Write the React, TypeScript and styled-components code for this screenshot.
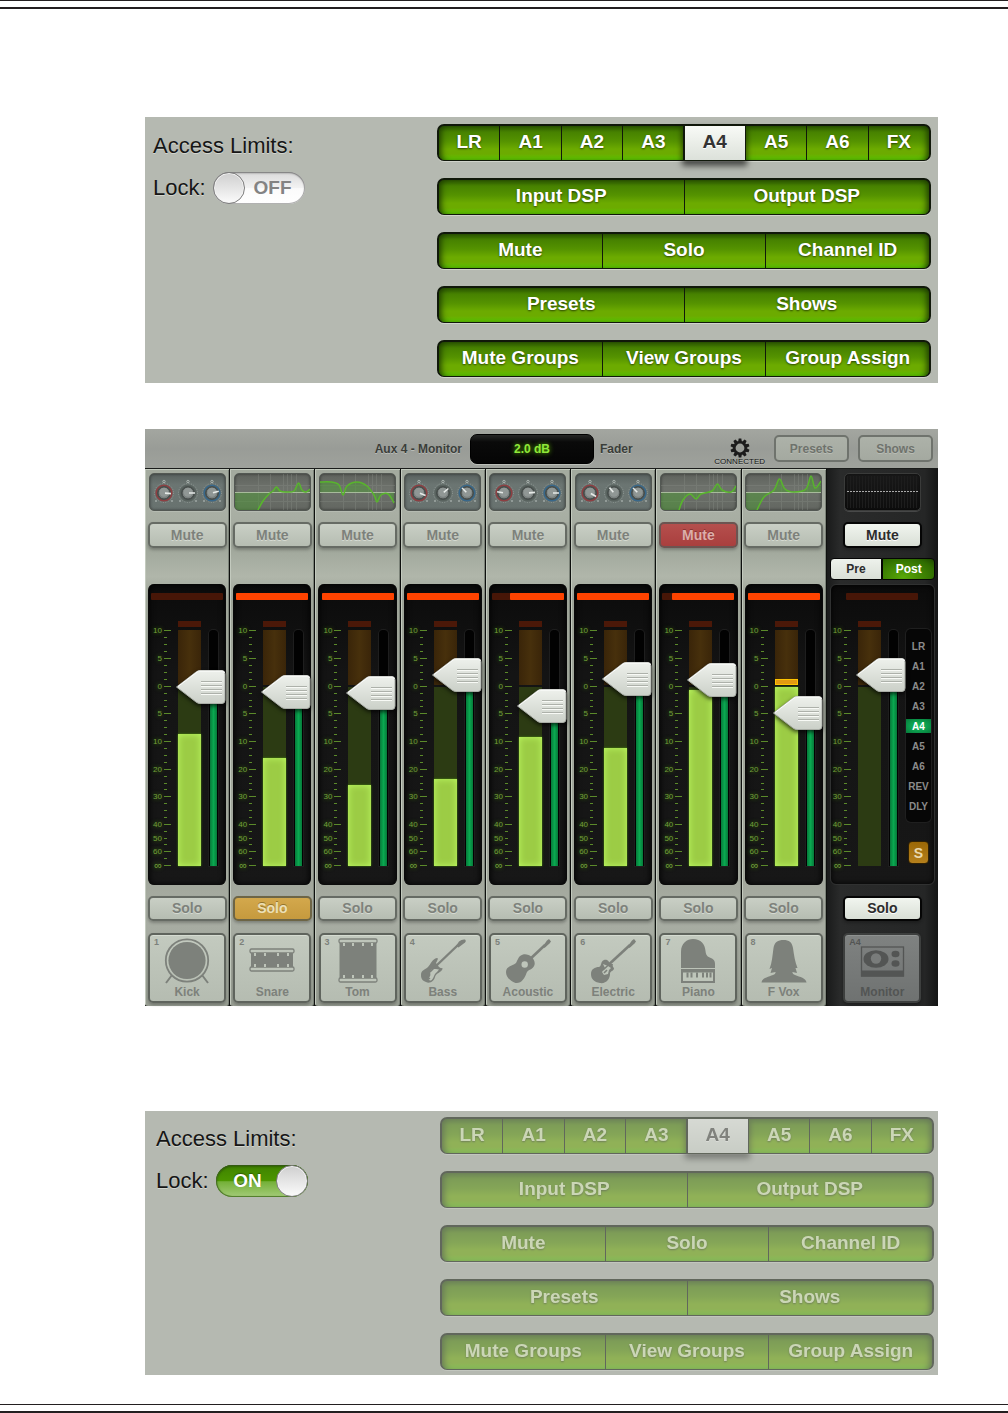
import React, { useId, useState } from "react";
import styled, { createGlobalStyle, css } from "styled-components";

const GlobalStyle = createGlobalStyle`
  *, *::before, *::after { box-sizing: border-box; }
  body {
    margin: 0;
    background: #ffffff;
    font-family: "Liberation Sans", Arial, Helvetica, sans-serif;
  }
  button { font-family: inherit; padding: 0; margin: 0; cursor: pointer; }
`;

/* ---------- page ---------- */

const Rule = styled.hr`
  height: 9px;
  margin: 0;
  border: solid #231f20;
  border-width: 1px 0 2px;
`;

const Main = styled.main`
  display: flex;
  flex-direction: column;
  padding: 108px 70px 29px 145px;
`;

const MixerFigure = styled.section`
  margin: 46px 0 105px;
`;

/* ---------- access limits ---------- */

const AccessPanel = styled.section<{ $pad: string }>`
  display: grid;
  grid-template-columns: minmax(0, 284fr) minmax(0, 494fr);
  padding: ${(p) => p.$pad};
  background: #b5b9b1;
`;

const AccessInfo = styled.div`
  display: flex;
  flex-direction: column;
  gap: 14px;
  padding-top: 10px;
  color: #161616;
  font-size: 22px;
  line-height: 24px;
  text-shadow: 0 1px 0 #d3d6cf;
`;

const AccessTitle = styled.h2`
  margin: 0;
  font: inherit;
`;

const LockRow = styled.label`
  display: flex;
  align-items: center;
  gap: 7px;
  height: 32px;
  cursor: pointer;
`;

const HiddenCheck = styled.input`
  position: absolute;
  opacity: 0;
`;

const SwitchTrack = styled.span<{ $on: boolean }>`
  display: flex;
  flex-direction: ${(p) => (p.$on ? "row-reverse" : "row")};
  align-items: center;
  width: 92px;
  height: 32px;
  border-radius: 16px;
  font-size: 19px;
  font-weight: bold;
  ${(p) =>
    p.$on
      ? css`
          color: #fff;
          text-shadow: 0 -1px 1px #2c5a00;
          background: linear-gradient(#3f8200, #4c9600 50%, #74b038 52%, #a3cb78);
          box-shadow: inset 0 1px 3px #1d4000, inset 0 0 0 1px #5d8a35;
        `
      : css`
          color: #838383;
          text-shadow: none;
          background: linear-gradient(#d9d9d9, #f3f3f3 50%, #fbfbfb 52%, #ffffff);
          box-shadow: inset 0 1px 2px #777, inset 0 0 0 1px #b5b5b5;
        `}
`;

const SwitchKnob = styled.span`
  width: 32px;
  height: 32px;
  border: 1px solid #7d7d7d;
  border-radius: 50%;
  background: linear-gradient(#cfcfcf, #fbfbfb);
  box-shadow: inset 0 0 0 1px #f4f4f4;
`;

const SwitchText = styled.span<{ $on: boolean }>`
  flex: 1;
  padding: ${(p) => (p.$on ? "0 0 0 4px" : "0 4px 0 0")};
  text-align: center;
`;

const Segments = styled.div`
  display: flex;
  height: 37px;
  border: 2px solid #10180a;
  border-bottom-width: 1px;
  border-radius: 7px;
  background: linear-gradient(#2b5600, #478200 18%, #559300 45%, #6cab00 68%, #6cab00 82%, #5cc400);
  box-shadow: inset 6px 0 6px -4px #1d3c00, inset -6px 0 6px -4px #1d3c00, 0 1px 0 #d0d3cb;
`;

const Segment = styled.button<{ $picked?: boolean }>`
  flex: 1 1 0;
  min-width: 0;
  padding-bottom: 2px;
  border: 0;
  background: none;
  color: #ffffff;
  font-size: 19px;
  font-weight: bold;
  line-height: 32px;
  text-shadow: 0 1px 2px rgba(0, 0, 0, 0.6);
  & + & { border-left: 1px solid #10180a; }
  &:disabled { color: #e2f4bc; cursor: default; }
  ${(p) =>
    p.$picked &&
    css`
      &, &:disabled { color: #333333; }
      text-shadow: 0 1px 0 #ffffff;
      background: linear-gradient(#f8faf6, #dce1da);
      box-shadow: 0 0 0 1px #10180a, 0 4px 6px 2px rgba(0, 0, 0, 0.6);
      &:disabled { color: #4c4d4a; }
    `}
`;

const AccessRows = styled.div<{ $locked: boolean }>`
  display: flex;
  flex-direction: column;
  gap: 17px;
  opacity: ${(p) => (p.$locked ? 0.5 : 1)};
`;

const ACCESS_ROWS = [
  ["LR", "A1", "A2", "A3", "A4", "A5", "A6", "FX"],
  ["Input DSP", "Output DSP"],
  ["Mute", "Solo", "Channel ID"],
  ["Presets", "Shows"],
  ["Mute Groups", "View Groups", "Group Assign"],
];

function AccessLimits({ initiallyLocked, pad }: { initiallyLocked: boolean; pad: string }) {
  const [locked, setLocked] = useState(initiallyLocked);
  const id = useId();
  return (
    <AccessPanel $pad={pad}>
      <AccessInfo>
        <AccessTitle>Access Limits:</AccessTitle>
        <LockRow htmlFor={id}>
          Lock:
          <HiddenCheck id={id} type="checkbox" checked={locked} onChange={(e) => setLocked(e.target.checked)} />
          <SwitchTrack $on={locked}>
            <SwitchKnob />
            <SwitchText $on={locked}>{locked ? "ON" : "OFF"}</SwitchText>
          </SwitchTrack>
        </LockRow>
      </AccessInfo>
      <AccessRows $locked={locked}>
        {ACCESS_ROWS.map((row) => (
          <Segments key={row[0]}>
            {row.map((name) => (
              <Segment key={name} type="button" disabled={locked} $picked={name === "A4"}>
                {name}
              </Segment>
            ))}
          </Segments>
        ))}
      </AccessRows>
    </AccessPanel>
  );
}

/* ---------- mixer header ---------- */

const Mixer = styled.div`
  background: #111311;
`;

const MixerHeader = styled.header`
  display: grid;
  grid-template-columns: minmax(0, 325fr) 124px minmax(0, 344fr);
  align-items: center;
  height: 40px;
  border-bottom: 1px solid #1a1c1a;
  background: linear-gradient(#a3a6a0, #999c97 50%, #9fa29c);
  color: #3a3d39;
  font-size: 12px;
  font-weight: bold;
  text-shadow: 0 1px 0 #b9bcb6;
`;

const SendName = styled.span`
  padding-right: 8px;
  text-align: right;
`;

const Readout = styled.output`
  height: 30px;
  border: 1px solid #000;
  border-radius: 7px;
  background: linear-gradient(#262726, #0a0a0a 25%, #050505);
  box-shadow: 0 1px 0 #bcbfb9;
  color: #8fe83a;
  line-height: 29px;
  text-align: center;
  text-shadow: 0 0 5px #62c000;
`;

const HeaderTools = styled.div`
  display: flex;
  align-items: center;
  gap: 9px;
  padding: 0 5px 0 6px;
`;

const ToolLabel = styled.span`
  flex: 1;
`;

const Connection = styled.div`
  display: flex;
  flex-direction: column;
  align-items: center;
  padding-top: 6px;
  color: #151515;
  font-size: 8px;
  font-weight: normal;
  line-height: 8px;
`;

const HeaderButton = styled.button`
  width: 75px;
  height: 27px;
  border: 2px solid #6f736d;
  border-radius: 5px;
  background: linear-gradient(#adb2a9, #a4a9a0);
  color: #6e726c;
  font-size: 12px;
  font-weight: bold;
  text-shadow: 0 1px 0 #b9bdb5;
`;

function Gear() {
  return (
    <svg width="20" height="20" viewBox="-10 -10 20 20" aria-hidden="true">
      {Array.from({ length: 10 }, (_, i) => (
        <path key={i} d="M-1.9 -6 L-1.3 -9.5 H1.3 L1.9 -6Z" fill="#1c1c1c" transform={`rotate(${i * 36})`} />
      ))}
      <circle r="5.7" fill="none" stroke="#1c1c1c" strokeWidth="2.6" />
    </svg>
  );
}

/* ---------- strip parts ---------- */

const Strips = styled.div`
  display: grid;
  grid-template-columns: repeat(8, minmax(0, 85fr)) minmax(0, 111fr);
`;

const Strip = styled.section<{ $master?: boolean }>`
  display: flex;
  flex-direction: column;
  align-items: center;
  padding: 4px 3px 3px;
  border-right: 1px solid #0e100e;
  border-radius: 0 0 3px 3px;
  background: linear-gradient(#a3aa9e, #a9afa4 8%, #a1a89c 15%, #b0b6aa 20%, #9fa599 24%, #a3a89d 78%, #aaafa5 82%, #989e93);
  box-shadow: inset 1px 1px 0 #c3cabe, inset -1px 0 0 #7b8278;
  ${(p) =>
    p.$master &&
    css`
      border-right: 0;
      background: linear-gradient(90deg, #1a1b1b, #2a2b2b 12%, #252626 88%, #141515);
      box-shadow: none;
    `}
`;

const Thumb = styled.div<{ $tone: "knob" | "eq" | "flat" }>`
  width: 77px;
  max-width: 100%;
  height: 38px;
  overflow: hidden;
  border: 1px solid ${(p) => (p.$tone === "flat" ? "#3a3b3a" : "#535853")};
  border-radius: 5px;
  background: ${(p) =>
    p.$tone === "knob"
      ? "linear-gradient(#59625f, #6b7572 30%, #68726f)"
      : p.$tone === "eq"
        ? "linear-gradient(#5f635d, #6e726c 40%, #636761)"
        : "linear-gradient(#191919, #0d0d0d)"};
  box-shadow: inset 0 0 3px rgba(0, 0, 0, 0.5), 0 1px 0 rgba(255, 255, 255, 0.15);
  svg { display: block; margin: -1px; }
`;

type Tone = "idle" | "muted" | "soloed" | "live";

const toneStyles: Record<Tone, ReturnType<typeof css>> = {
  idle: css`
    border-color: #666b64;
    background: linear-gradient(#c9cfc5, #b6bdb2);
    color: #7d817b;
    text-shadow: 0 1px 0 #d6dbd2;
  `,
  muted: css`
    border-color: #6c5451;
    background: linear-gradient(#b54f4d, #a93f3e);
    color: #dcaeaa;
    text-shadow: 0 -1px 0 #8a3433;
  `,
  soloed: css`
    border-color: #6d6546;
    background: linear-gradient(#d3a84c, #c69a3e);
    color: #ece0b8;
    text-shadow: 0 -1px 0 #94742c;
  `,
  live: css`
    border-color: #050505;
    background: linear-gradient(#f1f5ef, #d9dfd6);
    color: #2c2c2c;
    text-shadow: 0 1px 0 #ffffff;
  `,
};

const StripButton = styled.button<{ $tone: Tone }>`
  width: 79px;
  max-width: 100%;
  height: 26px;
  padding-bottom: 1px;
  border: 2px solid;
  border-radius: 5px;
  font-size: 14px;
  font-weight: bold;
  line-height: 20px;
  box-shadow: 0 2px 3px rgba(0, 0, 0, 0.25);
  ${(p) => toneStyles[p.$tone]}
`;

const MuteArea = styled.div`
  padding: 11px 0 10px;
`;

const TapArea = styled.div`
  display: flex;
  align-self: stretch;
  height: 26px;
  padding-bottom: 4px;
`;

const TapButton = styled.button<{ $on?: boolean }>`
  flex: 1 1 0;
  border: 1px solid #050505;
  color: ${(p) => (p.$on ? "#ffffff" : "#2c2c2c")};
  background: ${(p) =>
    p.$on ? "radial-gradient(ellipse at 40% 90%, #58a808, #2f6c00 75%, #1d4600)" : "linear-gradient(#eef2ec, #d9dfd6)"};
  font-size: 12px;
  font-weight: bold;
  &:first-child { border-radius: 4px 0 0 4px; }
  &:last-child { border-radius: 0 4px 4px 0; }
`;

/* ---------- fader well ---------- */

const Well = styled.div<{ $master?: boolean }>`
  display: flex;
  flex-direction: column;
  align-items: center;
  align-self: stretch;
  height: 301px;
  padding-top: ${(p) => (p.$master ? "8px" : "9px")};
  border: solid ${(p) => (p.$master ? "#303131" : "#0a0a0a")};
  border-width: ${(p) => (p.$master ? "1px" : "0 1px")};
  border-radius: 6px;
  background: linear-gradient(#0b0b0b, #141414 30%, #171717);
  box-shadow: inset 0 0 6px #000000;
`;

const ClipBar = styled.div`
  display: flex;
  justify-content: flex-end;
  width: 72px;
  height: 7px;
  margin-bottom: 21px;
  border-radius: 1px;
  background: #471607;
`;

const ClipLit = styled.div`
  border-radius: 1px;
  background: #ff4300;
`;

const WellBody = styled.div<{ $master?: boolean }>`
  display: flex;
  align-items: flex-start;
  align-self: stretch;
  padding-left: ${(p) => (p.$master ? "0" : "2px")};
`;

const ScaleLabels = styled.div`
  display: grid;
  grid-template-rows: 28px 28px 27px 28px 28px 27px 28px 14px 13px 13px 14px;
  width: 11px;
  padding-top: 6px;
  color: #719f3a;
  font-size: 8px;
  line-height: 8px;
  text-align: right;
  text-shadow: 0 0 4px #3d7a08;
  span:last-child { font-size: 11px; }
`;

const Ticks = styled.svg`
  display: block;
  flex: none;
  margin: 6px 6px 0 2px;
`;

const MeterColumn = styled.div`
  display: flex;
  flex: none;
  flex-direction: column;
  width: 23px;
  margin-right: 8px;
`;

const PeakLamp = styled.div`
  height: 6px;
  margin-bottom: 3px;
  background: #4b1808;
`;

const HotZone = styled.div`
  display: flex;
  flex-direction: column;
  justify-content: flex-end;
  height: 55px;
  margin-bottom: 2px;
  background: linear-gradient(90deg, #3a2509, #47300c 50%, #3a2509);
`;

const PeakHold = styled.div`
  height: 6px;
  border: 1px solid #ffc400;
  background: #e39a12;
`;

const CoolZone = styled.div`
  display: flex;
  flex-direction: column;
  justify-content: flex-end;
  height: 179px;
  background: #2c3b13;
`;

const LevelFill = styled.div`
  background: #9ccc45;
  box-shadow: inset 0 0 7px #bdfb62, 0 0 2px #4b8a12;
`;

const Fader = styled.div`
  position: relative;
  display: flex;
  flex: none;
  align-items: flex-end;
  width: 9px;
  height: 236px;
  margin-top: 9px;
  padding: 0 1px;
  border-radius: 4px 4px 0 0;
  background: #020202;
  box-shadow: 0 0 0 1px #1e1e1e;
`;

const FaderFill = styled.div`
  flex: 1;
  background: linear-gradient(90deg, #067a3a, #0aa850 50%, #067a3a);
`;

const FaderCap = styled.svg`
  position: absolute;
  left: -33px;
  filter: drop-shadow(0 2px 2px rgba(0, 0, 0, 0.7));
`;

const FaderInput = styled.input`
  position: absolute;
  inset: 0 -16px 0 -8px;
  width: 33px;
  height: 236px;
  margin: 0;
  opacity: 0;
  writing-mode: vertical-lr;
  direction: rtl;
  cursor: pointer;
`;

const SideColumn = styled.div`
  display: flex;
  flex-direction: column;
  align-items: center;
  gap: 19px;
  width: 25px;
  margin: 8px 3px 0 auto;
`;

const AssignList = styled.div`
  display: flex;
  flex-direction: column;
  align-self: stretch;
  padding: 7px 0 6px;
  border-radius: 5px;
  background: #060606;
  box-shadow: 0 0 0 1px #1f1f1f;
`;

const AssignButton = styled.button<{ $on: boolean }>`
  height: ${(p) => (p.$on ? "14px" : "20px")};
  margin: ${(p) => (p.$on ? "3px 0" : "0")};
  border: 0;
  background: ${(p) => (p.$on ? "radial-gradient(ellipse, #12c060, #067a3a)" : "none")};
  color: ${(p) => (p.$on ? "#ffffff" : "#8b8b8b")};
  font-size: 10px;
  font-weight: bold;
`;

const SafeButton = styled.button`
  width: 21px;
  height: 23px;
  border: 1px solid #2e2004;
  border-radius: 4px;
  background: linear-gradient(#9b6806, #b5801c);
  color: #e9d9b0;
  font-size: 14px;
  font-weight: bold;
`;

const SCALE = ["10", "5", "0", "5", "10", "20", "30", "40", "50", "60", "∞"];
const MAJOR = [4, 32, 60, 87, 115, 143, 170, 198, 225, 239];
const MINOR = [
  11, 18, 25, 39, 46, 53, 67, 74, 80, 94, 101, 108, 122, 129, 136, 150, 157, 163, 177, 184, 191, 205, 212, 218, 232,
];

function Cap({ bottom }: { bottom: number }) {
  const id = useId();
  return (
    <FaderCap width="50" height="36" viewBox="0 0 50 36" style={{ bottom }} aria-hidden="true">
      <defs>
        <linearGradient id={id} x1="0" y1="0" x2="0" y2="1">
          <stop offset="0" stopColor="#eef1ec" />
          <stop offset="1" stopColor="#cbd0c8" />
        </linearGradient>
      </defs>
      <path
        d="M0.5 18 L20 3 Q22 1.500 24 1.500 H46 Q49 1.500 49 5 V31 Q49 34.500 46 34.500 H24 Q22 34.500 20 33Z"
        fill={`url(#${id})`}
        stroke="#a9ada6"
      />
      <path d="M2 17.500 L21 3 Q22 2 24 2 H46 Q48 2 48.500 4" fill="none" stroke="#ffffff" />
      <path d="M25 12.500H46M25 16.500H46M25 20.500H46M25 24.500H46" stroke="#adb1aa" />
      <path d="M25 13.500H46M25 17.500H46M25 21.500H46M25 25.500H46" stroke="#f8faf6" />
    </FaderCap>
  );
}

interface WellProps {
  name: string;
  clip: number;
  level: number;
  fader: number;
  peak?: boolean;
  master?: boolean;
}

const ASSIGN = ["LR", "A1", "A2", "A3", "A4", "A5", "A6", "REV", "DLY"];

function FaderWell({ name, clip, level, fader, peak, master }: WellProps) {
  const [value, setValue] = useState(fader);
  return (
    <Well $master={master}>
      <ClipBar>
        <ClipLit style={{ width: `${clip}%` }} />
      </ClipBar>
      <WellBody $master={master}>
        <ScaleLabels>
          {SCALE.map((s, i) => (
            <span key={i}>{s}</span>
          ))}
        </ScaleLabels>
        <Ticks width="8" height="242" viewBox="0 0 8 242" stroke="#5b8a2a" aria-hidden="true">
          <path d={MAJOR.map((y) => `M0 ${y - 0.5}H7`).join("")} />
          <path d={MINOR.map((y) => `M0 ${y - 0.5}H3`).join("")} />
        </Ticks>
        <MeterColumn>
          <PeakLamp />
          <HotZone>{peak && <PeakHold />}</HotZone>
          <CoolZone>{level > 0 && <LevelFill style={{ height: level }} />}</CoolZone>
        </MeterColumn>
        <Fader>
          <FaderFill style={{ height: value }} />
          <Cap bottom={value - 18} />
          <FaderInput
            type="range"
            min={0}
            max={236}
            value={value}
            aria-label={`${name} fader`}
            onChange={(e) => setValue(Number(e.target.value))}
          />
        </Fader>
        {master && (
          <SideColumn>
            <AssignList>
              {ASSIGN.map((a) => (
                <AssignButton key={a} type="button" $on={a === "A4"}>
                  {a}
                </AssignButton>
              ))}
            </AssignList>
            <SafeButton type="button">S</SafeButton>
          </SideColumn>
        )}
      </WellBody>
    </Well>
  );
}

/* ---------- thumbnails ---------- */

function Knobs({ angles }: { angles: number[] }) {
  const rings = ["#8d3f42", "#59635f", "#39688a"];
  return (
    <svg width="77" height="38" viewBox="0 0 77 38" aria-hidden="true">
      {angles.map((a, i) => (
        <g key={i} transform={`translate(${15 + i * 24} 20)`}>
          <circle r="9.500" fill="none" stroke="#a7b0ac" strokeDasharray="1 1.500" strokeWidth="1" opacity="0.6" />
          <circle r="7.800" fill="#4a5250" stroke={rings[i]} strokeWidth="1.600" />
          <circle r="6" fill="#7b8280" stroke="#444a48" />
          <circle r="4.500" cy="-0.800" fill="#909795" />
          <path d="M1 0H7" stroke="#e6eae8" strokeWidth="1.600" transform={`rotate(${a})`} />
          <circle cy="-11.500" r="1.200" fill="none" stroke="#b9c1bd" strokeWidth="0.800" />
          <path d="M-9 8h2M7 8h2" stroke="#b9c1bd" strokeWidth="1.200" />
        </g>
      ))}
    </svg>
  );
}

type Point = [number, number];

function smooth(points: Point[]) {
  return points.slice(1).reduce((d, p, i) => {
    const a = points[i];
    const before = points[i - 1] ?? a;
    const after = points[i + 2] ?? p;
    const c1 = [a[0] + (p[0] - before[0]) / 6, a[1] + (p[1] - before[1]) / 6];
    const c2 = [p[0] - (after[0] - a[0]) / 6, p[1] - (after[1] - a[1]) / 6];
    return `${d}C${c1.join(" ")} ${c2.join(" ")} ${p.join(" ")}`;
  }, `M${points[0].join(" ")}`);
}

function EqCurve({ points }: { points: Point[] }) {
  const line = smooth(points);
  const [x0, y0] = points[0];
  const lead = y0 > 30 ? `L1 ${y0}` : "";
  const area = `${line}L${points[points.length - 1][0]} 20L1 20${lead}L${x0} ${y0}Z`;
  return (
    <svg width="77" height="38" viewBox="0 0 77 38" aria-hidden="true">
      <path
        d="M0 12.500H77M0 28.500H77M24.500 0V38M36.500 0V38M49.500 0V38M53.500 0V38M57.500 0V38M62.500 0V38"
        stroke="#858983"
        opacity="0.4"
      />
      <path d={area} fill="#4e9a35" opacity="0.5" />
      <path d="M1 19.500H76" stroke="#a7bb9b" />
      <path d={line} fill="none" stroke="#58b52c" strokeWidth="1.500" />
    </svg>
  );
}

function FlatGraph() {
  return (
    <svg width="77" height="38" viewBox="0 0 77 38" aria-hidden="true">
      <path d={Array.from({ length: 24 }, (_, i) => `M${3.5 + i * 3} 3V35`).join("")} stroke="#1d1d1d" />
      <path d="M3 18.500H74" stroke="#a9a9a9" strokeDasharray="2 1" />
    </svg>
  );
}

/* ---------- channel tiles ---------- */

const Tile = styled.button<{ $master?: boolean }>`
  display: flex;
  flex-direction: column;
  align-items: center;
  position: relative;
  width: 78px;
  max-width: 100%;
  height: 70px;
  margin-top: 12px;
  padding-top: 3px;
  border: 2px solid ${(p) => (p.$master ? "#3d3f3e" : "#5f645d")};
  border-radius: 5px;
  background: ${(p) => (p.$master ? "linear-gradient(#7f8281, #6f7271)" : "linear-gradient(#c3cabf, #b5bcb1)")};
  box-shadow: inset 0 1px 0 ${(p) => (p.$master ? "#8f9291" : "#d6dcd2")}, 0 2px 3px rgba(0, 0, 0, 0.25);
  color: ${(p) => (p.$master ? "#535554" : "#7d817b")};
  --paper: ${(p) => (p.$master ? "#797c7b" : "#bec5ba")};
  font-size: 12px;
  font-weight: bold;
  line-height: 14px;
  svg { display: block; flex: none; }
`;

const TileNumber = styled.span`
  position: absolute;
  top: 2px;
  left: 4px;
  font-size: 9px;
  font-weight: bold;
  line-height: 10px;
`;

const ICONS: Record<string, React.ReactNode> = {
  Kick: (
    <>
      <circle cx="23" cy="22.500" r="18.600" />
      <circle cx="23" cy="22.500" r="21.200" fill="none" stroke="currentColor" strokeWidth="1.800" />
      <path d="M8 37L2 45M38 37L44 45" stroke="currentColor" strokeWidth="2" />
    </>
  ),
  Snare: (
    <>
      <rect x="2" y="13" width="42" height="18" />
      <rect x="1" y="11" width="44" height="4" rx="1.500" fill="var(--paper)" stroke="currentColor" strokeWidth="1.300" />
      <rect x="1" y="29" width="44" height="4" rx="1.500" fill="var(--paper)" stroke="currentColor" strokeWidth="1.300" />
      <path d="M6 15v3M16 15v3M29 15v3M39 15v3M6 26v3M16 26v3M29 26v3M39 26v3" stroke="var(--paper)" strokeWidth="2" />
    </>
  ),
  Tom: (
    <>
      <rect x="4.500" y="3" width="37" height="40" />
      <rect x="4" y="1" width="38" height="4" rx="1.500" fill="var(--paper)" stroke="currentColor" strokeWidth="1.300" />
      <rect x="4" y="40" width="38" height="4" rx="1.500" fill="var(--paper)" stroke="currentColor" strokeWidth="1.300" />
      <path d="M9 5v3M18 5v3M28 5v3M37 5v3M9 37v3M18 37v3M28 37v3M37 37v3" stroke="var(--paper)" strokeWidth="2" />
    </>
  ),
  Bass: (
    <>
      <path d="M16 28L38 7" stroke="currentColor" strokeWidth="2.400" />
      <path d="M36 8L39 3.500 Q42 1 45 1.500 Q46.500 3 45 4.500 L38.500 9.500Z" />
      <path d="M1 37 C1 32 5 32 8 29 C11 26 12 21 17 20 C19 20 17 23 16 25 L19 29 C21 31 24 29 22 32 C20 35 16 35 15 39 C14 43 10 46 6 44 C3 43 1 41 1 37Z" />
      <path d="M12.500 31 C8 34 12 36 9.500 39 C8 41 9 43 11 42.500 C14 41 13.500 36 17 34 L19 31.500 L16 31Z" fill="var(--paper)" />
      <path d="M10 34L17 27M6 38l4 3" stroke="currentColor" strokeWidth="1.500" />
    </>
  ),
  Acoustic: (
    <>
      <path d="M22 24L40 7" stroke="currentColor" strokeWidth="2.600" />
      <path d="M38 8L42 2.500L44 1L46 3.500L44.500 5.500L39.500 10Z" />
      <path d="M1 34 C1 28 8 28 11 25 C13 22 13 18 18 16.500 C24 15 31 21 29.500 27 C28 32 23 31 21.500 35 C20 40 16 46 10.500 45 C5 43 1 39 1 34Z" />
      <circle cx="19.700" cy="26.500" r="3.200" fill="var(--paper)" />
    </>
  ),
  Electric: (
    <>
      <path d="M15 30L40 7" stroke="currentColor" strokeWidth="2.600" />
      <path d="M38 8L42 2.500L44 1L46 3.500L44.500 5.500L39.500 10Z" />
      <path d="M1 36 C1 31 5 29 9 29 C12 28 10 24 14 22 C18 21 19 24 20 26 L23 26 C22 29 24 29 24 31 C22 34 20 33 20 36 C20 41 16 46 10 45 C4 44 1 41 1 36Z" />
      <path d="M13 26l2 4l-3 4l2 3l4 -1l1 -4l2 -2l-3 -2Z" fill="var(--paper)" />
      <path d="M13 32L20 25.500M14 35l3 -3" stroke="currentColor" strokeWidth="1.600" />
    </>
  ),
  Piano: (
    <>
      <path d="M6 30V14 C6 5 12 1 18 1 C26 1 30 6 30.500 13 C31 19 34 19 37 20.500 C39.500 22 40 24 40 26V30Z" />
      <rect x="6" y="31" width="34" height="14" />
      <rect x="8" y="34.500" width="30" height="8.500" fill="var(--paper)" />
      <path d="M12.500 34.500v5M16.500 34.500v5M22 34.500v5M28 34.500v5M32 34.500v5M35.500 34.500v5" stroke="currentColor" strokeWidth="2" />
    </>
  ),
  "F Vox": (
    <path d="M0.500 44.500 C1 40 7 39 12 37 Q15 36 14.500 34 L9.500 35 L11 30 L8.500 31 C11 25 11.500 17 12.500 10 C13.500 4 17 2 22.500 2 C28 2 31 4 32 10 C33 17 34 24 36.500 30 L34.500 30 L36 35 L31.500 34 Q31 36 34 37 C39 39 45 40 45.500 44.500Z" />
  ),
  Monitor: (
    <>
      <rect x="2.500" y="9" width="42" height="29" fill="none" stroke="currentColor" strokeWidth="1.300" />
      <rect x="2" y="32.500" width="43" height="6" />
      <ellipse cx="17" cy="21" rx="12.500" ry="8.800" />
      <circle cx="17" cy="20.500" r="5.200" fill="var(--paper)" />
      <ellipse cx="36.500" cy="16" rx="4" ry="3.200" />
      <ellipse cx="36.500" cy="25.500" rx="4" ry="3.200" />
    </>
  ),
};

function ChannelTile({ no, name, master }: { no: string; name: string; master?: boolean }) {
  return (
    <Tile type="button" $master={master}>
      <TileNumber>{no}</TileNumber>
      <svg width="46" height="47" viewBox="0 0 46 47" fill="currentColor" aria-hidden="true">
        {ICONS[name]}
      </svg>
      {name}
    </Tile>
  );
}

/* ---------- mixer ---------- */

const WellGap = styled.div`
  height: 26px;
`;

const SoloArea = styled.div`
  padding-top: 11px;
  height: 36px;
  ${StripButton} { height: 25px; }
`;

interface Channel {
  name: string;
  knobs?: number[];
  eq?: Point[];
  clip: number;
  level: number;
  fader: number;
  peak?: boolean;
  muted?: boolean;
  soloed?: boolean;
}

const CHANNELS: Channel[] = [
  { name: "Kick", knobs: [5, 0, -15], clip: 0, level: 132, fader: 179 },
  {
    name: "Snare",
    eq: [[24, 37], [29, 28], [35, 21], [39, 18], [42.5, 14], [46, 18], [52, 19], [60, 18], [64.5, 10], [68, 17], [72, 19], [76, 16]],
    clip: 100, level: 108, fader: 174, soloed: true,
  },
  {
    name: "Tom",
    eq: [[1, 9], [12, 9], [20, 12], [24, 22], [28, 13], [38, 9], [48, 13], [55, 22], [58, 29], [62, 22], [69, 21], [75, 30]],
    clip: 100, level: 81, fader: 173,
  },
  { name: "Bass", knobs: [20, -40, -135], clip: 100, level: 87, fader: 191 },
  { name: "Acoustic", knobs: [-170, -5, 0], clip: 75, level: 129, fader: 160 },
  { name: "Electric", knobs: [30, -130, -135], clip: 100, level: 118, fader: 187 },
  {
    name: "Piano",
    eq: [[19, 37], [23, 27], [30, 21], [36, 26], [41, 21], [52, 18], [57.5, 11], [62, 17], [71, 19], [76, 13]],
    clip: 87, level: 176, fader: 186, muted: true,
  },
  {
    name: "F Vox",
    eq: [[12, 37], [19, 24], [29, 17], [34.5, 6], [40, 16], [49, 19], [61, 16], [66, 3], [70, 15], [76, 8]],
    clip: 100, level: 179, fader: 153, peak: true,
  },
];

function MixerView() {
  return (
    <Mixer>
      <MixerHeader>
        <SendName>Aux 4 - Monitor</SendName>
        <Readout>2.0 dB</Readout>
        <HeaderTools>
          <ToolLabel>Fader</ToolLabel>
          <Connection>
            <Gear />
            CONNECTED
          </Connection>
          <HeaderButton type="button">Presets</HeaderButton>
          <HeaderButton type="button">Shows</HeaderButton>
        </HeaderTools>
      </MixerHeader>
      <Strips>
        {CHANNELS.map((c, i) => (
          <Strip key={c.name}>
            <Thumb $tone={c.knobs ? "knob" : "eq"}>
              {c.knobs && <Knobs angles={c.knobs} />}
              {c.eq && <EqCurve points={c.eq} />}
            </Thumb>
            <MuteArea>
              <StripButton type="button" $tone={c.muted ? "muted" : "idle"}>Mute</StripButton>
            </MuteArea>
            <WellGap />
            <FaderWell name={c.name} clip={c.clip} level={c.level} fader={c.fader} peak={c.peak} />
            <SoloArea>
              <StripButton type="button" $tone={c.soloed ? "soloed" : "idle"}>Solo</StripButton>
            </SoloArea>
            <ChannelTile no={String(i + 1)} name={c.name} />
          </Strip>
        ))}
        <Strip $master>
          <Thumb $tone="flat">
            <FlatGraph />
          </Thumb>
          <MuteArea>
            <StripButton type="button" $tone="live">Mute</StripButton>
          </MuteArea>
          <TapArea>
            <TapButton type="button">Pre</TapButton>
            <TapButton type="button" $on>Post</TapButton>
          </TapArea>
          <FaderWell name="Monitor" clip={0} level={0} fader={191} master />
          <SoloArea>
            <StripButton type="button" $tone="live">Solo</StripButton>
          </SoloArea>
          <ChannelTile no="A4" name="Monitor" master />
        </Strip>
      </Strips>
    </Mixer>
  );
}

export default function App() {
  return (
    <>
      <GlobalStyle />
      <Rule />
      <Main>
        <AccessLimits initiallyLocked={false} pad="7px 7px 6px 8px" />
        <MixerFigure>
          <MixerView />
        </MixerFigure>
        <AccessLimits initiallyLocked pad="6px 4px 5px 11px" />
      </Main>
      <Rule />
    </>
  );
}
